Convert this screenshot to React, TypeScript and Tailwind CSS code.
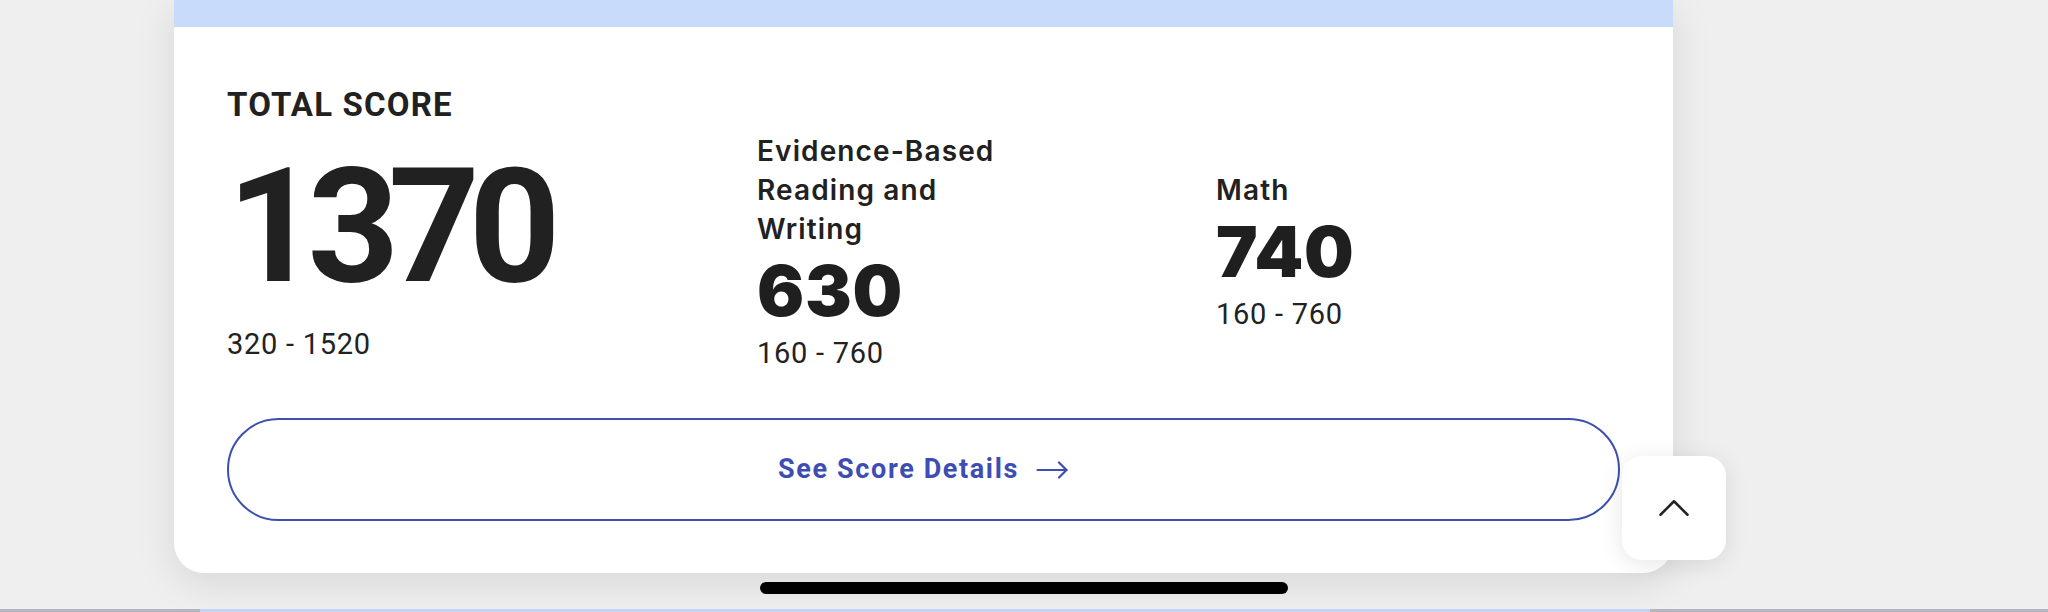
import { ChevronUp } from 'lucide-react'

type Section = { label: string; score: number; range: string }

const sections: Section[] = [
  { label: 'Evidence-Based Reading and Writing', score: 630, range: '160 - 760' },
  { label: 'Math', score: 740, range: '160 - 760' },
]

function ArrowRight() {
  return (
    <svg width="33" height="18" viewBox="0 0 33 18" fill="none" stroke="currentColor" strokeWidth="2.2" strokeLinecap="round" strokeLinejoin="round">
      <path d="M1.5 9h29" />
      <path d="M23 1.5 30.5 9 23 16.5" />
    </svg>
  )
}

function SectionScore({ label, score, range }: Section) {
  return (
    <div className="flex flex-col">
      <p className="max-w-[262px] font-['Inter'] text-[28px] leading-[39px] font-semibold tracking-[0.04em] text-[#212121]">
        {label}
      </p>
      <p className="mt-[7px] font-['Inter'] text-[70px] leading-[70px] font-black tracking-[0.01em] text-[#1f1f1f]">
        {score}
      </p>
      <p className="mt-[9px] text-[29px] leading-[36px] tracking-[0.025em] text-[#222]">{range}</p>
    </div>
  )
}

export default function App() {
  return (
    <div className="relative h-[612px] w-[2048px] overflow-hidden bg-[#efefef] font-['Roboto',sans-serif]">
      {/* Score card */}
      <div className="ml-[174px] w-[1499px] rounded-b-[30px] bg-white shadow-[0_10px_40px_rgba(0,0,0,0.10)]">
        <div className="h-[27px] bg-[#c9dbfb]" />
        <div className="px-[53px] pt-[59px] pb-[52px]">
          <div className="flex items-start">
            {/* Total */}
            <div className="flex w-[530px] flex-col">
              <p className="text-[33px] leading-[38px] font-bold tracking-[0.035em] text-[#212121]">TOTAL SCORE</p>
              <p className="mt-[23px] text-[160px] leading-[160px] font-bold tracking-[-0.07em] text-[#212121]">1370</p>
              <p className="mt-[19px] text-[29px] leading-[36px] tracking-[0.025em] text-[#222]">320 - 1520</p>
            </div>

            {/* Sections */}
            <div className="mt-[46px] flex flex-1 items-center">
              <div className="w-[459px]">
                <SectionScore {...sections[0]} />
              </div>
              <div className="flex-1">
                <SectionScore {...sections[1]} />
              </div>
            </div>
          </div>

          <button className="mt-[47px] flex h-[103px] w-full items-center justify-center gap-[17px] rounded-full border-2 border-[#3e4fae] text-[#3d4db3]">
            <span className="text-[27px] font-bold tracking-[0.06em]">See Score Details</span>
            <ArrowRight />
          </button>
        </div>
      </div>

      {/* Home indicator */}
      <div className="mx-auto mt-[9px] h-[12px] w-[528px] rounded-full bg-black" />

      {/* Next card peeking in */}
      <div className="mt-[15px] h-[3px] bg-[#b3b6bd]">
        <div className="ml-[200px] h-[3px] w-[1450px] bg-[#c6d4f0]" />
      </div>

      {/* Scroll to top */}
      <button className="absolute left-[1622px] top-[456px] flex h-[104px] w-[104px] items-center justify-center rounded-[20px] bg-white shadow-[0_4px_24px_rgba(0,0,0,0.10)]">
        <ChevronUp className="h-[54px] w-[54px] text-[#222]" strokeWidth={1.1} />
      </button>
    </div>
  )
}
